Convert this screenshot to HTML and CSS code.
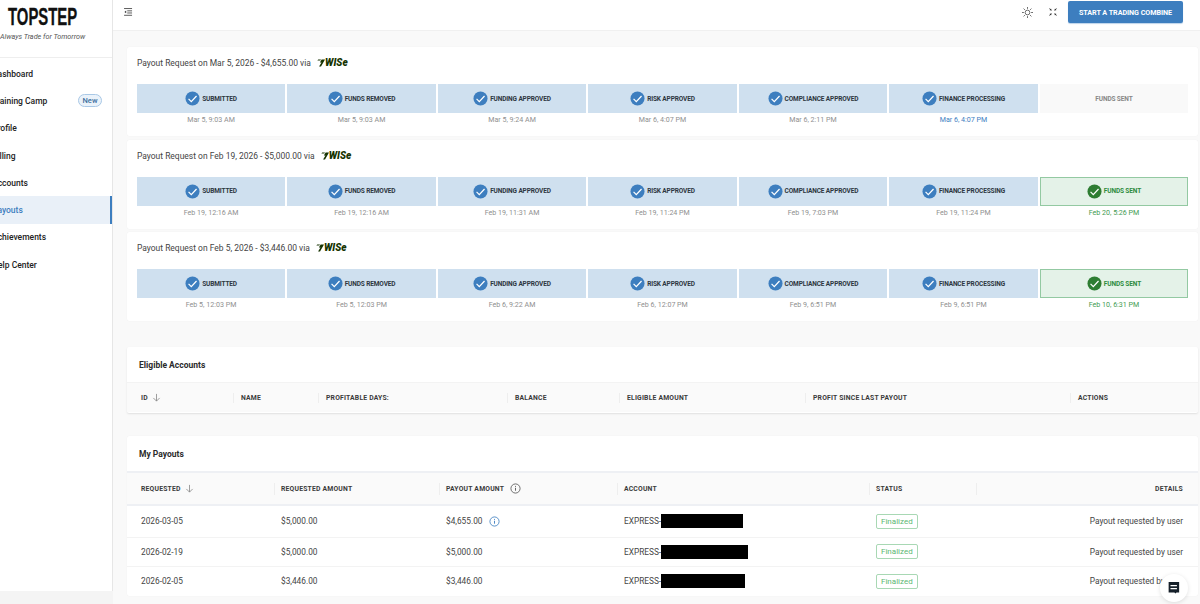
FILE: index.html
```html
<!DOCTYPE html>
<html lang="en">
<head>
<meta charset="utf-8">
<title>Payouts</title>
<link rel="stylesheet" href="styles.css">
</head>
<body>
<svg class="defs" aria-hidden="true"><defs>
<symbol id="chk" viewBox="0 0 16 16"><circle cx="8" cy="8" r="7.5" fill="currentColor"/><path d="M3.8 8.4l2.9 2.9 5.6-6" fill="none" stroke="#fff" stroke-width="1.3"/></symbol>
<symbol id="flag" viewBox="0 0 10 9"><path d="M1.500 0h3.500L4 1.500H.5zM5.800 0H10L5 9H2.600l3-5H3.600z" fill="#163300"/></symbol>
<symbol id="down" viewBox="0 0 10 10"><path d="M5 1v8M1.500 5.500L5 9l3.500-3.500" fill="none" stroke="#888" stroke-width=".9"/></symbol>
<symbol id="info" viewBox="0 0 12 12"><circle cx="6" cy="6" r="5" fill="none" stroke="currentColor" stroke-width=".9"/><path d="M6 5.200v3.200M6 3.200v1" stroke="currentColor" stroke-width="1"/></symbol>
</defs></svg>
<div class="shell">
<aside class="side">
<div class="brand">
<div class="logo">TOPSTEP</div>
<div class="tag">Always Trade for Tomorrow</div>
</div>
<nav class="nav">
<a class="item">Dashboard</a>
<a class="item">Training Camp<span class="pill">New</span></a>
<a class="item">Profile</a>
<a class="item">Billing</a>
<a class="item">Accounts</a>
<a class="item on">Payouts</a>
<a class="item">Achievements</a>
<a class="item">Help Center</a>
</nav>
</aside>
<div class="body">
<header class="top">
<svg class="menu" viewBox="0 0 10 9"><path d="M0 .6h9M3.600 3.200H9M3.600 5.600H9M0 8.200h9" stroke="#333" stroke-width=".9"/><path d="M2.400 2.800v3L.4 4.400z" fill="#333"/></svg>
<svg class="sun" viewBox="0 0 14 14"><circle cx="7" cy="7" r="3" fill="none" stroke="#333" stroke-width=".9"/><path d="M7 0v2.400M7 11.600V14M0 7h2.400M11.600 7H14M2 2l1.700 1.700M10.300 10.300L12 12M2 12l1.700-1.700M10.300 3.700L12 2" stroke="#333" stroke-width=".9"/></svg>
<svg class="full" viewBox="0 0 10 10"><path d="M.5 2.500L3.500 3.500 2.500.5zM9.500 2.500L6.500 3.500 7.500.5zM.5 7.500L3.500 6.500 2.500 9.500zM9.500 7.500L6.500 6.500 7.500 9.500z" fill="#333"/><path d="M.5.500l2 2M9.500.5l-2 2M.5 9.500l2-2M9.500 9.500l-2-2" stroke="#333" stroke-width=".9"/></svg>
<button class="cta">START A TRADING COMBINE</button>
</header>
<main class="main">

<section class="card req">
<h2 class="rt">Payout Request on Mar 5, 2026 - $4,655.00 via <span class="wise"><svg class="flag"><use href="#flag"/></svg>WISe</span></h2>
<div class="steps">
<div class="st"><div class="box"><svg class="ck"><use href="#chk"/></svg>SUBMITTED</div><time>Mar 5, 9:03 AM</time></div>
<div class="st"><div class="box"><svg class="ck"><use href="#chk"/></svg>FUNDS REMOVED</div><time>Mar 5, 9:03 AM</time></div>
<div class="st"><div class="box"><svg class="ck"><use href="#chk"/></svg>FUNDING APPROVED</div><time>Mar 5, 9:24 AM</time></div>
<div class="st"><div class="box"><svg class="ck"><use href="#chk"/></svg>RISK APPROVED</div><time>Mar 6, 4:07 PM</time></div>
<div class="st"><div class="box"><svg class="ck"><use href="#chk"/></svg>COMPLIANCE APPROVED</div><time>Mar 6, 2:11 PM</time></div>
<div class="st cur"><div class="box"><svg class="ck"><use href="#chk"/></svg>FINANCE PROCESSING</div><time>Mar 6, 4:07 PM</time></div>
<div class="st todo"><div class="box">FUNDS SENT</div><time></time></div>
</div>
</section>

<section class="card req">
<h2 class="rt">Payout Request on Feb 19, 2026 - $5,000.00 via <span class="wise"><svg class="flag"><use href="#flag"/></svg>WISe</span></h2>
<div class="steps">
<div class="st"><div class="box"><svg class="ck"><use href="#chk"/></svg>SUBMITTED</div><time>Feb 19, 12:16 AM</time></div>
<div class="st"><div class="box"><svg class="ck"><use href="#chk"/></svg>FUNDS REMOVED</div><time>Feb 19, 12:16 AM</time></div>
<div class="st"><div class="box"><svg class="ck"><use href="#chk"/></svg>FUNDING APPROVED</div><time>Feb 19, 11:31 AM</time></div>
<div class="st"><div class="box"><svg class="ck"><use href="#chk"/></svg>RISK APPROVED</div><time>Feb 19, 11:24 PM</time></div>
<div class="st"><div class="box"><svg class="ck"><use href="#chk"/></svg>COMPLIANCE APPROVED</div><time>Feb 19, 7:03 PM</time></div>
<div class="st"><div class="box"><svg class="ck"><use href="#chk"/></svg>FINANCE PROCESSING</div><time>Feb 19, 11:24 PM</time></div>
<div class="st done"><div class="box"><svg class="ck"><use href="#chk"/></svg>FUNDS SENT</div><time>Feb 20, 5:26 PM</time></div>
</div>
</section>

<section class="card req">
<h2 class="rt">Payout Request on Feb 5, 2026 - $3,446.00 via <span class="wise"><svg class="flag"><use href="#flag"/></svg>WISe</span></h2>
<div class="steps">
<div class="st"><div class="box"><svg class="ck"><use href="#chk"/></svg>SUBMITTED</div><time>Feb 5, 12:03 PM</time></div>
<div class="st"><div class="box"><svg class="ck"><use href="#chk"/></svg>FUNDS REMOVED</div><time>Feb 5, 12:03 PM</time></div>
<div class="st"><div class="box"><svg class="ck"><use href="#chk"/></svg>FUNDING APPROVED</div><time>Feb 6, 9:22 AM</time></div>
<div class="st"><div class="box"><svg class="ck"><use href="#chk"/></svg>RISK APPROVED</div><time>Feb 6, 12:07 PM</time></div>
<div class="st"><div class="box"><svg class="ck"><use href="#chk"/></svg>COMPLIANCE APPROVED</div><time>Feb 9, 6:51 PM</time></div>
<div class="st"><div class="box"><svg class="ck"><use href="#chk"/></svg>FINANCE PROCESSING</div><time>Feb 9, 6:51 PM</time></div>
<div class="st done"><div class="box"><svg class="ck"><use href="#chk"/></svg>FUNDS SENT</div><time>Feb 10, 6:31 PM</time></div>
</div>
</section>

<section class="card elig">
<h3 class="ct">Eligible Accounts</h3>
<div class="hd hd-e">
<div class="th first">ID <svg class="dn"><use href="#down"/></svg></div>
<div class="th">NAME</div>
<div class="th">PROFITABLE DAYS:</div>
<div class="th">BALANCE</div>
<div class="th">ELIGIBLE AMOUNT</div>
<div class="th">PROFIT SINCE LAST PAYOUT</div>
<div class="th">ACTIONS</div>
</div>
</section>

<section class="card pays">
<h3 class="ct pc">My Payouts</h3>
<div class="hd hd-p">
<div class="th first">REQUESTED <svg class="dn"><use href="#down"/></svg></div>
<div class="th">REQUESTED AMOUNT</div>
<div class="th">PAYOUT AMOUNT <svg class="inf"><use href="#info"/></svg></div>
<div class="th">ACCOUNT</div>
<div class="th">STATUS</div>
<div class="th right">DETAILS</div>
</div>
<div class="tr">
<div class="td first">2026-03-05</div><div class="td">$5,000.00</div>
<div class="td">$4,655.00 <svg class="inf blue"><use href="#info"/></svg></div>
<div class="td">EXPRESS-<span class="red r1"></span></div>
<div class="td"><span class="tag-ok">Finalized</span></div>
<div class="td right">Payout requested by user</div>
</div>
<div class="tr">
<div class="td first">2026-02-19</div><div class="td">$5,000.00</div>
<div class="td">$5,000.00</div>
<div class="td">EXPRESS-<span class="red r2"></span></div>
<div class="td"><span class="tag-ok">Finalized</span></div>
<div class="td right">Payout requested by user</div>
</div>
<div class="tr last">
<div class="td first">2026-02-05</div><div class="td">$3,446.00</div>
<div class="td">$3,446.00</div>
<div class="td">EXPRESS-<span class="red r3"></span></div>
<div class="td"><span class="tag-ok">Finalized</span></div>
<div class="td right">Payout requested by user</div>
</div>
</section>
</main>
</div>
</div>
<button class="chat" aria-label="Chat"><svg viewBox="0 0 12 12"><path d="M1 1h10v10H8.500L7.500 12 6.500 11H1z" fill="#16202a" transform="translate(.5 0) scale(.9)"/><path d="M3 4h5.500M3 6.500h5.500" stroke="#fff" stroke-width="1"/></svg></button>
</body>
</html>
```
FILE: styles.css
```css
* { box-sizing: border-box; }
html, body { margin: 0; height: 604px; overflow: hidden; }
body { font-family: Roboto, "Liberation Sans", sans-serif; color: #333; background: #f4f4f4; }
.defs { position: absolute; width: 0; height: 0; }
.shell { display: flex; height: 604px; }

.side { width: 113px; height: 591px; flex: none; background: #fff; border-right: 1px solid #e6e6e6; overflow: hidden; }
.brand { height: 58px; border-bottom: 1px solid #eee; padding-top: 5px; }
.logo { font-family: "Liberation Sans", sans-serif; font-weight: 700; font-size: 24px; line-height: 23px; color: #111; margin-left: 8px; width: 120px; transform: scaleX(.62); transform-origin: left center; -webkit-text-stroke: .3px #111; }
.tag { font-size: 7.200px; font-style: italic; color: #555; line-height: 10px; margin-top: 4px; white-space: nowrap; }
.nav { display: flex; flex-direction: column; padding-top: 2px; }
.item { height: 27.300px; display: flex; align-items: center; font-size: 8.500px; font-weight: 500; color: #222; white-space: nowrap; margin-left: -8px; position: relative; }
.item.on { background: #e9f0f8; color: #3d7ebf; border-right: 2px solid #3d7ebf; }
.pill { position: absolute; right: 10px; top: 7px; height: 13px; width: 24px; border: 1px solid #a9c8e6; background: #eaf2fa; border-radius: 7px; font-size: 7.500px; line-height: 11px; text-align: center; color: #3d6f9e; }

.body { flex: 1; min-width: 0; display: flex; flex-direction: column; background: #f9f9f9; }
.top { height: 31px; flex: none; background: #fff; border-bottom: 1px solid #f0f0f0; display: flex; align-items: flex-start; padding: 1px 17px 0 11px; }
.menu { width: 9px; height: 8px; margin-top: 7px; }
.sun { width: 11px; height: 11px; margin: 6px 0 0 auto; }
.full { width: 8px; height: 8px; margin: 7px 0 0 16px; }
.cta { width: 115px; height: 22px; margin-left: 11px; border: 0; border-radius: 2px; background: #3d7ebf; color: #fff; font: 700 7.200px Roboto, sans-serif; letter-spacing: -.05px; padding: 0; box-shadow: 0 1px 1px #bcd3ea; }

.main { padding: 16px 2px 0 14px; display: flex; flex-direction: column; }
.card { background: #fff; border-radius: 2px; box-shadow: 0 0 1px rgba(0,0,0,.08); }
.req { height: 89px; padding: 10px 10px 0; margin-bottom: 3.500px; }
.rt { margin: 0; height: 12px; display: flex; align-items: center; font-weight: 400; font-size: 8.470px; color: #444; white-space: pre; }
.wise { display: inline-flex; align-items: center; margin-left: 4px; font: italic 900 10px Roboto, sans-serif; color: #163300; line-height: 10px; }
.flag { width: 8px; height: 8px; }
.steps { display: grid; grid-template-columns: repeat(7, 1fr); gap: 2.400px; margin-top: 15px; }
.st { display: flex; flex-direction: column; align-items: stretch; min-width: 0; }
.box { height: 29px; background: #cfe0ef; display: flex; align-items: center; justify-content: center; font-size: 6.500px; font-weight: 700; letter-spacing: -.12px; color: #2d3640; white-space: nowrap; }
.ck { width: 15px; height: 15px; color: #3d7ebf; margin-right: 2px; flex: none; }
.st time { height: 14px; line-height: 14px; text-align: center; font-size: 7.100px; color: #8f8f8f; }
.cur time { color: #3d7ebf; }
.todo .box { background: #f9f9f9; color: #888; }
.done .box { background: #e4f2e8; border: 1px solid #93c9a2; color: #2e8b3e; }
.done .ck { color: #2e7d32; }
.done time { color: #3f9b52; }

.elig { height: 66px; margin-top: 22px; box-shadow: 0 1px 2px rgba(0,0,0,.1); }
.pays { height: 160px; margin-top: 23px; }
.ct { margin: 0; font-size: 8.500px; font-weight: 700; color: #2a2a2a; height: 36px; line-height: 36px; padding-left: 12px; border-bottom: 1px solid #f3f3f3; }
.pc { height: 37px; border-bottom: 2px solid #eef0f4; }
.hd { display: grid; background: #fafafa; align-items: stretch; }
.hd-e { grid-template-columns: 106px 85px 189px 112px 186px 265px 128px; height: 29px; padding-top: 1px; }
.hd-p { grid-template-columns: 147px 165px 178px 252px 107px 222px; height: 33px; border-bottom: 2px solid #eef0f4; padding-top: 1px; }
.th { position: relative; display: flex; align-items: center; padding-left: 8px; font-size: 6.800px; font-weight: 700; letter-spacing: .2px; color: #3a3a3a; white-space: pre; }
.hd-p .th { padding-left: 7px; }
.th::before { content: ""; position: absolute; left: 0; top: 9px; bottom: 9px; width: 1px; background: #eee; }
.hd .th.first { padding-left: 14px; }
.th.first::before { display: none; }
.th.right { justify-content: flex-end; padding-right: 15px; }
.dn { width: 9px; height: 9px; margin-left: 2px; }
.inf { width: 11px; height: 11px; margin-left: 4px; color: #555; }
.inf.blue { color: #3d7ebf; }
.tr { display: grid; grid-template-columns: 147px 165px 178px 252px 107px 222px; height: 32px; border-bottom: 1px solid #f3f3f3; }
.tr + .tr { height: 29px; }
.tr.last { border-bottom: 0; }
.td { display: flex; align-items: center; padding-left: 7px; font-size: 8.300px; color: #444; white-space: pre; }
.td.first { padding-left: 14px; }
.td.right { justify-content: flex-end; padding-right: 15px; }
.red { display: inline-block; height: 14px; background: #000; }
.r1 { width: 82px; }
.r2 { width: 87px; }
.r3 { width: 84px; }
.tag-ok { height: 15px; line-height: 13px; padding: 0 4px; border: 1px solid #a8d8b4; border-radius: 2px; font-size: 8px; color: #5cb874; }

.chat { position: absolute; left: 1160px; top: 574px; width: 28px; height: 28px; border: 0; padding: 7px; border-radius: 50%; background: #fff; box-shadow: 0 1px 4px rgba(0,0,0,.12); }
.chat svg { display: block; width: 100%; height: 100%; }
```
